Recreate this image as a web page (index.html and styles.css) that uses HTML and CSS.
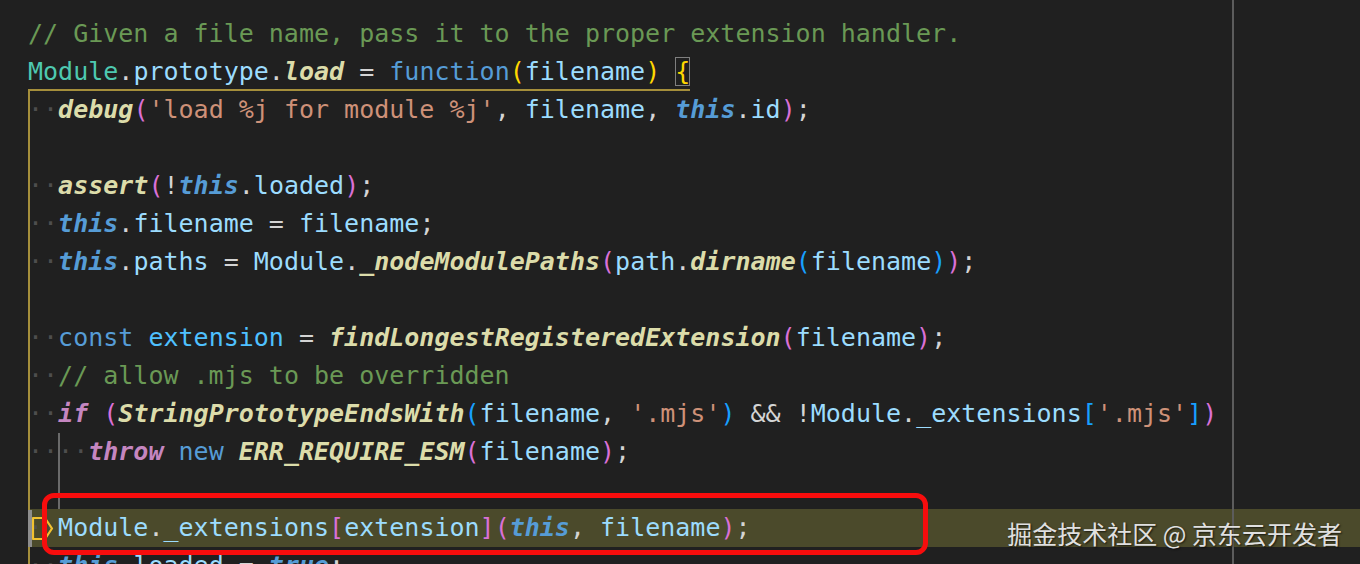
FILE: index.html
```html
<!DOCTYPE html>
<html lang="en">
<head>
<meta charset="utf-8">
<title>Module.prototype.load</title>
<link rel="stylesheet" href="styles.css">
</head>
<body>
<div class="editor">
  <div class="code">
    <div class="line"><span class="cm">// Given a file name, pass it to the proper extension handler.</span></div>
    <div class="line"><span class="cls">Module</span><span class="op">.</span><span class="var">prototype</span><span class="op">.</span><span class="fn">load</span><span class="op"> = </span><span class="kw">function</span><span class="b1">(</span><span class="var">filename</span><span class="b1">)</span> <span class="b1 match">{</span></div>
    <div class="line"><span class="ws">··</span><span class="fn">debug</span><span class="b2">(</span><span class="str">'load %j for module %j'</span><span class="op">, </span><span class="var">filename</span><span class="op">, </span><span class="this">this</span><span class="op">.</span><span class="var">id</span><span class="b2">)</span><span class="op">;</span></div>
    <div class="line"></div>
    <div class="line"><span class="ws">··</span><span class="fn">assert</span><span class="b2">(</span><span class="op">!</span><span class="this">this</span><span class="op">.</span><span class="var">loaded</span><span class="b2">)</span><span class="op">;</span></div>
    <div class="line"><span class="ws">··</span><span class="this">this</span><span class="op">.</span><span class="var">filename</span><span class="op"> = </span><span class="var">filename</span><span class="op">;</span></div>
    <div class="line"><span class="ws">··</span><span class="this">this</span><span class="op">.</span><span class="var">paths</span><span class="op"> = </span><span class="var">Module</span><span class="op">.</span><span class="fn">_nodeModulePaths</span><span class="b2">(</span><span class="var">path</span><span class="op">.</span><span class="fn">dirname</span><span class="b3">(</span><span class="var">filename</span><span class="b3">)</span><span class="b2">)</span><span class="op">;</span></div>
    <div class="line"></div>
    <div class="line"><span class="ws">··</span><span class="kw">const</span> <span class="const">extension</span><span class="op"> = </span><span class="fn">findLongestRegisteredExtension</span><span class="b2">(</span><span class="var">filename</span><span class="b2">)</span><span class="op">;</span></div>
    <div class="line"><span class="ws">··</span><span class="cm">// allow .mjs to be overridden</span></div>
    <div class="line"><span class="ws">··</span><span class="ctl">if</span> <span class="b2">(</span><span class="fn">StringPrototypeEndsWith</span><span class="b3">(</span><span class="var">filename</span><span class="op">, </span><span class="str">'.mjs'</span><span class="b3">)</span><span class="op"> &amp;&amp; !</span><span class="var">Module</span><span class="op">.</span><span class="var">_extensions</span><span class="b3">[</span><span class="str">'.mjs'</span><span class="b3">]</span><span class="b2">)</span></div>
    <div class="line"><span class="ws">····</span><span class="ctl">throw</span> <span class="kw">new</span> <span class="fn">ERR_REQUIRE_ESM</span><span class="b2">(</span><span class="var">filename</span><span class="b2">)</span><span class="op">;</span></div>
    <div class="line"></div>
    <div class="line current"><span class="ws">··</span><span class="var">Module</span><span class="op">.</span><span class="var">_extensions</span><span class="b2">[</span><span class="var">extension</span><span class="b2">]</span><span class="b2">(</span><span class="this">this</span><span class="op">, </span><span class="var">filename</span><span class="b2">)</span><span class="op">;</span></div>
    <div class="line"><span class="ws">··</span><span class="this">this</span><span class="op">.</span><span class="var">loaded</span><span class="op"> = </span><span class="this">true</span><span class="op">;</span></div>
  </div>

  <div class="ruler"></div>
  <div class="bracket-guide"></div>
  <div class="indent-guide"></div>
  <svg class="frame-icon" width="28" height="38" viewBox="0 0 28 38" aria-hidden="true">
    <path d="M5 9 H17 L24 19.5 L17 30 H5 Z" fill="none" stroke="#f2c230" stroke-width="2.2" stroke-linejoin="round"/>
    <rect x="0" y="1" width="4" height="37" fill="#8d8d8d"/>
  </svg>
  <div class="annotation"></div>
  <div class="watermark">掘金技术社区 @ 京东云开发者</div>
</div>
</body>
</html>
```
FILE: styles.css
```css
html, body {
  margin: 0;
  padding: 0;
  background: #202020;
  overflow: hidden;
}

.editor {
  position: relative;
  width: 1360px;
  height: 564px;
  overflow: hidden;
  background: #202020;
}

.code {
  padding-top: 15px;
  font-family: "DejaVu Sans Mono", "Liberation Mono", monospace;
  font-size: 25px;
  line-height: 38px;
  color: #d4d4d4;
}

.line {
  height: 38px;
  padding-left: 28px;
  white-space: pre;
}

.line.current {
  background: linear-gradient(to right, transparent 30px, #4b4a2b 30px);
}

.ws { color: #4e4e4e; }
.cm { color: #6a9955; }
.cls { color: #4ec9b0; }
.var { color: #9cdcfe; }
.const { color: #4fc1ff; }
.op { color: #d4d4d4; }
.kw { color: #569cd6; }
.str { color: #ce9178; }
.fn { color: #dcdcaa; font-weight: bold; font-style: italic; }
.this { color: #569cd6; font-weight: bold; font-style: italic; }
.ctl { color: #c586c0; font-weight: bold; font-style: italic; }
.b1 { color: #ffd700; }
.b2 { color: #da70d6; }
.b3 { color: #179fff; }

.match {
  outline: 1px solid #7f7f7f;
  outline-offset: -1px;
}

.ruler {
  position: absolute;
  left: 1232px;
  top: 0;
  width: 2px;
  height: 564px;
  background: #5c5c5c;
}

.bracket-guide {
  position: absolute;
  left: 28px;
  top: 89px;
  width: 662px;
  height: 480px;
  border-top: 2px solid #a58f3b;
  border-left: 2px solid #a58f3b;
  box-sizing: border-box;
}

.indent-guide {
  position: absolute;
  left: 58px;
  top: 433px;
  width: 2px;
  height: 76px;
  background: #6a6a6a;
}

.frame-icon {
  position: absolute;
  left: 28px;
  top: 509px;
}

.annotation {
  position: absolute;
  left: 42px;
  top: 493px;
  width: 886px;
  height: 62px;
  box-sizing: border-box;
  border: 5px solid #f70d0d;
  border-radius: 12px;
}

.watermark {
  position: absolute;
  right: 18px;
  top: 514px;
  font-family: "Noto Sans CJK SC", "Noto Sans", sans-serif;
  font-size: 25px;
  line-height: 38px;
  color: #e0e0e0;
  text-shadow: 1px 1px 2px rgba(0, 0, 0, 0.7);
}
```
